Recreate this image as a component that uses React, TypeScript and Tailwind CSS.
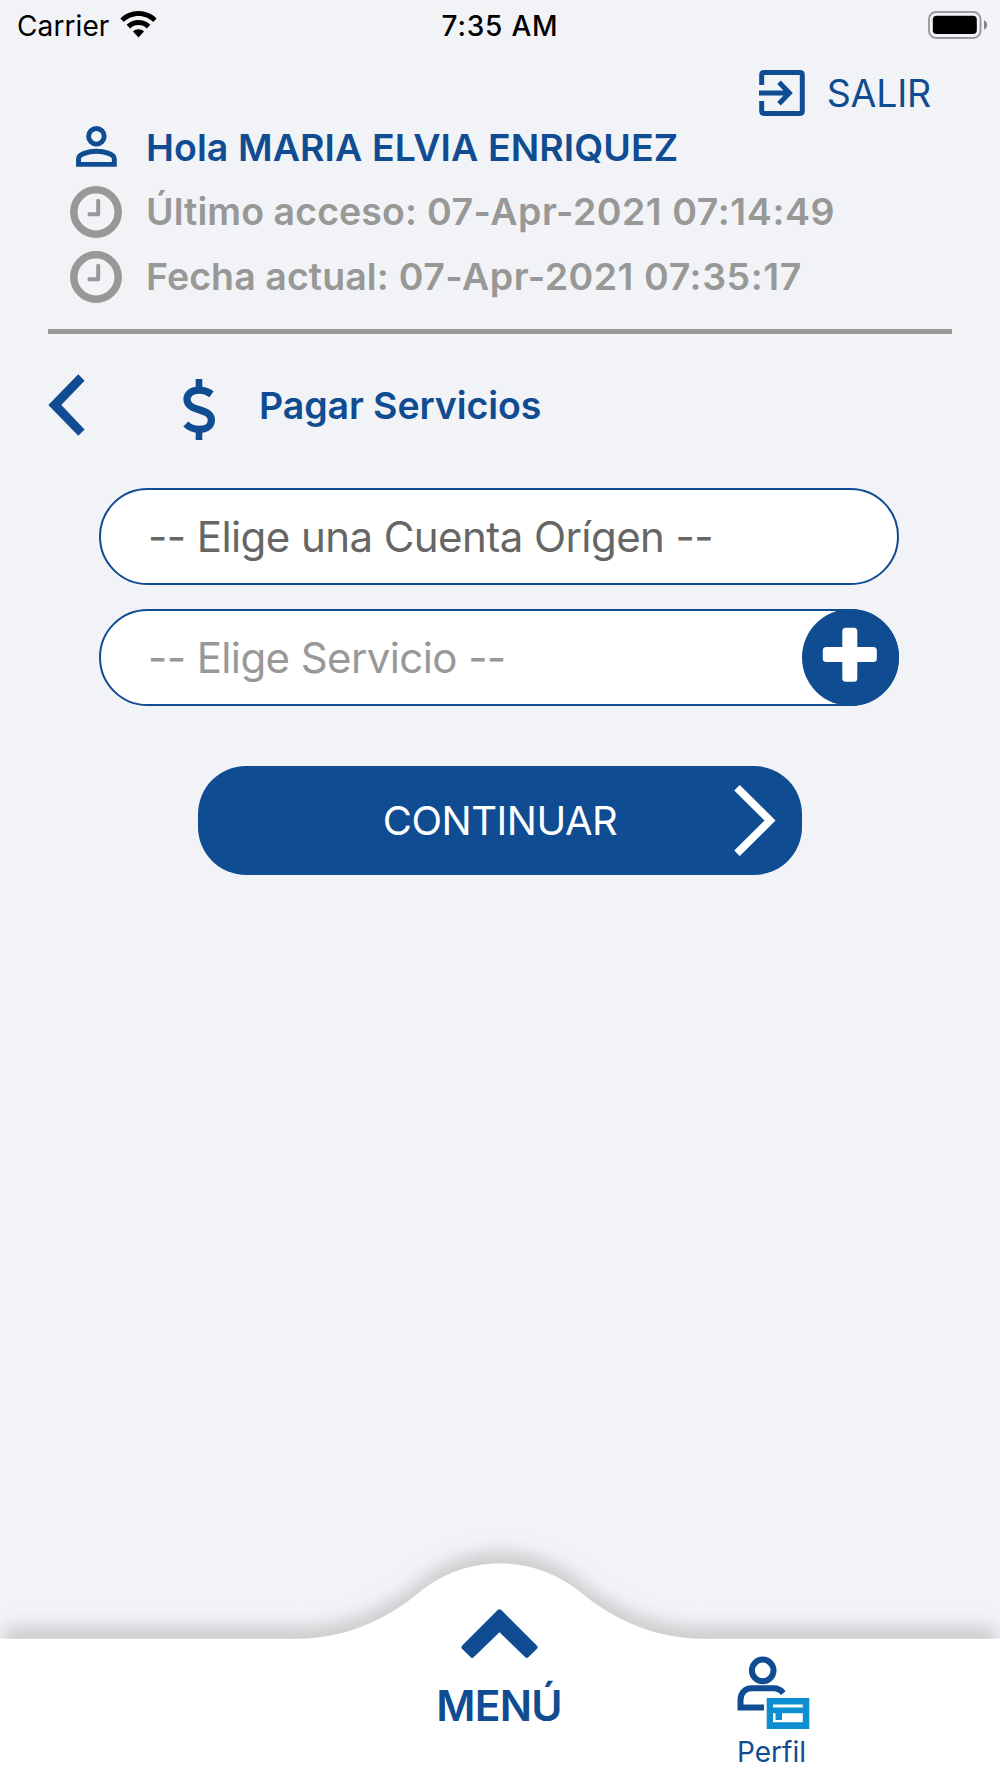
import { FC, ReactNode } from 'react'

const WifiIcon: FC = () => (
  <svg viewBox="0 0 37 27" className="h-[27px] w-[37px]" fill="#000">
    <path d="M18.5 0C25.6 0 32 2.8 36.6 7.4L33.1 11C29.4 7.3 24.2 5.1 18.5 5.1S7.6 7.3 3.9 11L.4 7.4C5 2.8 11.4 0 18.5 0Z" />
    <path d="M18.5 8.9c4.6 0 8.8 1.8 11.9 4.8l-3.6 3.7c-2.1-2.1-5-3.3-8.3-3.3s-6.2 1.2-8.3 3.3l-3.6-3.7c3.1-3 7.3-4.8 11.9-4.8Z" />
    <path d="M18.5 18.2c2.1 0 4.1.8 5.5 2.2L18.5 26.5 13 20.4c1.4-1.4 3.4-2.2 5.5-2.2Z" />
  </svg>
)

const BatteryIcon: FC = () => (
  <svg viewBox="0 0 60 28" className="h-7 w-[60px]">
    <rect x="1" y="1" width="51.5" height="26" rx="7" fill="none" stroke="#98999c" strokeWidth="1.9" />
    <rect x="4.8" y="4.8" width="44" height="18.2" rx="3.8" fill="#000" />
    <path d="M56 9.2c2 .9 3.1 2.7 3.1 4.8s-1.1 3.9-3.1 4.8Z" fill="#838488" />
  </svg>
)

const ExitIcon: FC = () => (
  <svg viewBox="0 0 46 46" className="h-[46px] w-[46px]" fill="none" stroke="#0f4c91" strokeWidth="5">
    <path d="M2.7 15V5q0-2.4 2.4-2.4h35.8q2.4 0 2.4 2.4v36q0 2.4-2.4 2.4H5.1Q2.7 43.4 2.7 41V31" />
    <path d="M0 23h30M20 12.3 30.3 23 20 33.7" />
  </svg>
)

const PersonIcon: FC = () => (
  <svg viewBox="0 0 41 41" className="mb-[2px] h-[41px] w-[41px]" fill="none" stroke="#0f4c91" strokeWidth="4.9">
    <circle cx="20.4" cy="10.3" r="7.8" />
    <path d="M2.5 38.4v-5.6c0-4.4 9.4-7.5 17.9-7.5s17.9 3.1 17.9 7.5v5.6Z" />
  </svg>
)

const ClockIcon: FC = () => (
  <svg viewBox="0 0 52 52" className="h-[52px] w-[52px]" fill="none" stroke="#989896">
    <circle cx="26" cy="26" r="22.2" strokeWidth="7.5" />
    <path d="M28.2 14.7v13.6H19.4" strokeWidth="4" strokeLinecap="round" strokeLinejoin="round" />
  </svg>
)

const ProfileIcon: FC = () => (
  <svg viewBox="0 0 73 73" className="h-[73px] w-[73px]">
    <g fill="none" stroke="#0f4c91" strokeWidth="6">
      <circle cx="25.7" cy="14.4" r="10.8" />
      <path d="M27 51.5H3.5V44c0-7.5 5-11.7 11-11.7h22c4 0 7 1.2 9.8 4.8" />
    </g>
    <path fill="#0c8fd0" fillRule="evenodd" d="M29.7 42h42.6v31H29.7ZM36 48.5v3h29.8v-3ZM36 57.3v9h29.8v-9H45v6.7h-6.5v-6.7Z" />
  </svg>
)

interface InfoRowProps {
  icon: ReactNode
  label: string
  date?: string
  time?: string
  className: string
}

const InfoRow: FC<InfoRowProps> = ({ icon, label, date, time, className }) => (
  <div className={`flex items-center ${className}`}>
    <div className="flex w-[52px] shrink-0 justify-center">{icon}</div>
    <p className="whitespace-nowrap pl-6 pt-px text-[37.5px] font-semibold leading-none tracking-[0.08px]">
      {label}
      {date && <span className="tracking-[0.5px] [font-feature-settings:'calt'_0]"> {date}</span>}
      {time && <span className="tracking-[0.6px]"> {time}</span>}
    </p>
  </div>
)

const StatusBar: FC = () => (
  <div className="grid h-[50px] grid-cols-3 items-center text-[28px] leading-none text-black">
    <div className="flex items-center gap-[11px] pl-[17px]">
      <span className="pt-px tracking-[0.1px]">Carrier</span>
      <div className="-mt-[2px]"><WifiIcon /></div>
    </div>
    <span className="pt-px text-center font-medium tracking-[0.8px]">7:35 AM</span>
    <div className="flex justify-end pr-3">
      <div className="-mt-px"><BatteryIcon /></div>
    </div>
  </div>
)

const Header: FC = () => (
  <header className="mx-12 border-b-[5px] border-[#989896] pb-5 pt-[15px]">
    <button className="ml-auto flex h-14 items-center gap-[22px] pr-[21px] text-[37.5px] leading-none text-[#0f4c91]">
      <ExitIcon />
      <span className="pt-[2px] tracking-[-0.2px]">SALIR</span>
    </button>
    <div className="pl-[22px] text-[#989896]">
      <InfoRow icon={<PersonIcon />} label="Hola MARIA ELVIA ENRIQUEZ" className="mb-[6px] h-[52px] text-[#0f4c91]" />
      <InfoRow icon={<ClockIcon />} label="Último acceso:" date="07-Apr-2021" time="07:14:49" className="h-[65px]" />
      <InfoRow icon={<ClockIcon />} label="Fecha actual:" date="07-Apr-2021" time="07:35:17" className="h-[65px]" />
    </div>
  </header>
)

const TitleRow: FC = () => (
  <div className="flex h-[142px] items-center pl-12 text-[#0f4c91]">
    <svg viewBox="0 0 37 62" className="mb-px h-[62px] w-[37px]" fill="#0f4c91">
      <path d="M30.3.3 36.6 6.7 13.3 31 36.6 55.4 30.3 61.8.3 31Z" />
    </svg>
    <svg viewBox="0 0 32 61" className="ml-[98px] mt-2 h-[61px] w-8" fill="none" stroke="#0f4c91">
      <path d="M16 0v10M16 51v10" strokeWidth="6.6" />
      <path d="M28.5 15.2C25 12.8 20.5 11.2 16 11.2c-7.2 0-12 3.6-12 9.3 0 12.2 24.4 8.3 24.4 20.4 0 5.8-5.2 9.5-12.4 9.5-5.6 0-9.6-1.9-13.2-5.4" strokeWidth="7.2" />
    </svg>
    <h1 className="ml-11 pt-[2px] text-[37.5px] font-semibold leading-none tracking-[-0.1px]">Pagar Servicios</h1>
  </div>
)

const PaymentForm: FC = () => (
  <div className="mt-3 flex flex-col px-[99px] [font-feature-settings:'calt'_0]">
    <div className="flex h-[97px] w-[800px] items-center rounded-full border-2 border-[#0f4c91] bg-white pl-[47px] text-[42px] leading-none tracking-[-0.57px] text-[#666]">
      <span>-- Elige una Cuenta Orígen --</span>
    </div>
    <div className="mt-6 flex h-[97px] w-[800px] items-center justify-between rounded-full border-2 border-[#0f4c91] bg-white pl-[47px] text-[42px] leading-none tracking-[-0.6px] text-[#989898]">
      <span>-- Elige Servicio --</span>
      <button className="-mr-[2px] h-[97px] w-[97px] shrink-0 rounded-full bg-[#0f4c91]">
        <svg viewBox="0 0 97 97" fill="#fff">
          <rect x="20.8" y="38" width="54" height="15" rx="3.5" />
          <rect x="40.3" y="18.8" width="15" height="54" rx="3.5" />
        </svg>
      </button>
    </div>
    <button className="mt-[60px] grid h-[109px] w-[604px] grid-cols-[1fr_auto_1fr] items-center self-center rounded-[48px] bg-[#0f4c91] text-[40px] leading-none text-white">
      <span className="col-start-2 pt-px tracking-[-0.5px]">CONTINUAR</span>
      <svg viewBox="0 0 42 71" className="mr-[26px] h-[71px] w-[42px] justify-self-end" fill="none" stroke="#fff" strokeWidth="7.8">
        <path d="M3 2.7 36 35.5 3 68.3" />
      </svg>
    </button>
  </div>
)

const BottomBar: FC = () => (
  <footer className="relative mt-auto h-[248px] overflow-hidden text-[#0f4c91]">
    <svg viewBox="0 0 1000 248" className="absolute inset-0 h-[248px] w-[1000px]">
      <defs>
        <filter id="shade" x="-5%" y="-30%" width="110%" height="160%">
          <feGaussianBlur stdDeviation="8" />
        </filter>
      </defs>
      <path
        d="M4 96H296C350 96 392 74 422 48C444 32 468 21 500 21S556 32 578 48C608 74 650 96 704 96H996V270H4Z"
        fill="#cecfd0"
        filter="url(#shade)"
      />
      <path d="M0 108.7H296C350 108.7 392 86 422 60C444 44 468 33.5 500 33.5S556 44 578 60C608 86 650 108.7 704 108.7H1000V248H0Z" fill="#fff" />
    </svg>
    <div className="relative grid h-full grid-cols-[1fr_160px_1fr]">
      <button className="col-start-2 flex flex-col items-center pr-[2px] pt-[79px]">
        <svg viewBox="0 0 77 49" className="h-[49px] w-[77px]" fill="#0f4c91" stroke="#0f4c91" strokeWidth="5" strokeLinejoin="round">
          <path d="M38.5 2.8 74 38.3 65.8 46.3 38.5 19.7 11.2 46.3 3 38.3Z" />
        </svg>
        <span className="mt-[27px] text-[42.5px] font-semibold leading-none tracking-[-0.8px]">MENÚ</span>
      </button>
      <button className="ml-[157px] flex flex-col items-start pt-[126px]">
        <ProfileIcon />
        <span className="mt-[9px] text-[28px] leading-none">Perfil</span>
      </button>
    </div>
  </footer>
)

export default function App() {
  return (
    <main className="flex h-[1778px] w-[1000px] flex-col overflow-hidden bg-[#f1f3f7] font-['Inter',sans-serif]">
      <StatusBar />
      <Header />
      <TitleRow />
      <PaymentForm />
      <BottomBar />
    </main>
  )
}
